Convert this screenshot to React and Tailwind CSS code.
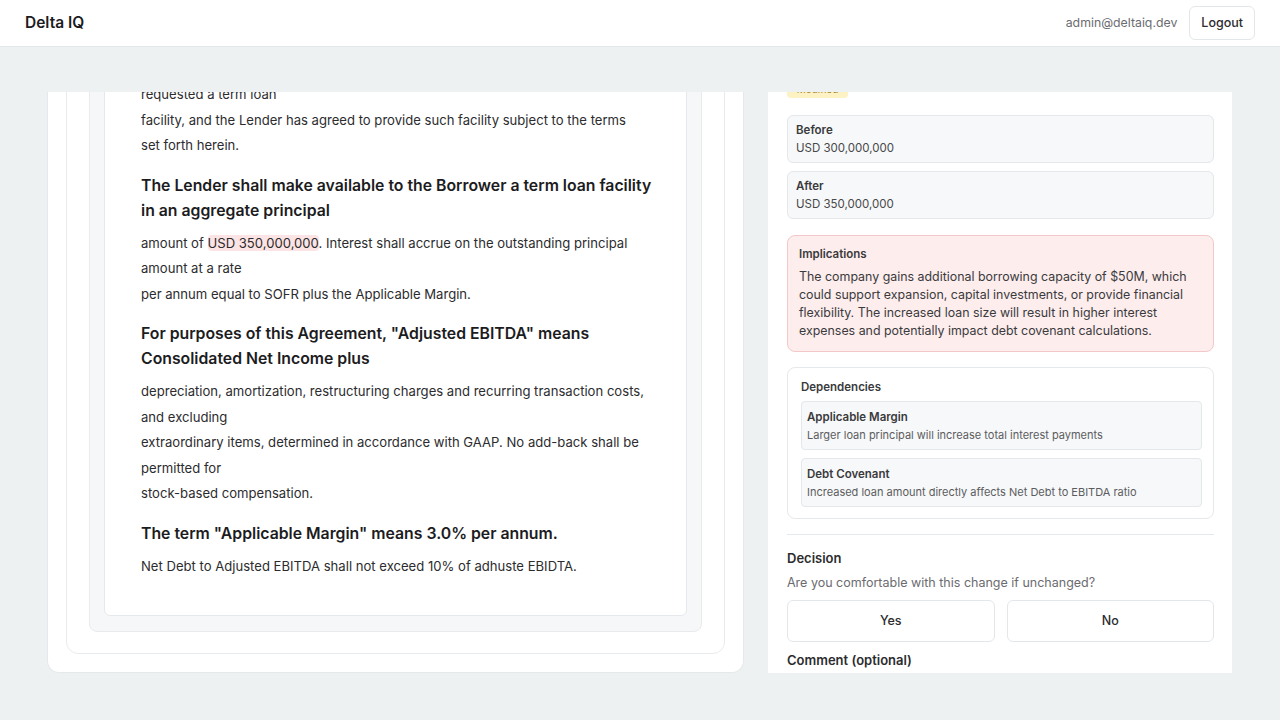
import React from 'react';

const docBlocks = [
  {
    type: 'p',
    lines: [
      'requested a term loan',
      'facility, and the Lender has agreed to provide such facility subject to the terms',
      'set forth herein.',
    ],
  },
  {
    type: 'h',
    lines: ['The Lender shall make available to the Borrower a term loan facility', 'in an aggregate principal'],
  },
  {
    type: 'p',
    lines: [
      'amount of __HL__. Interest shall accrue on the outstanding principal',
      'amount at a rate',
      'per annum equal to SOFR plus the Applicable Margin.',
    ],
  },
  {
    type: 'h',
    lines: ['For purposes of this Agreement, "Adjusted EBITDA" means', 'Consolidated Net Income plus'],
  },
  {
    type: 'p',
    lines: [
      'depreciation, amortization, restructuring charges and recurring transaction costs,',
      'and excluding',
      'extraordinary items, determined in accordance with GAAP. No add-back shall be',
      'permitted for',
      'stock-based compensation.',
    ],
  },
  { type: 'h', lines: ['The term "Applicable Margin" means 3.0% per annum.'] },
  { type: 'p', lines: ['Net Debt to Adjusted EBITDA shall not exceed 10% of adhuste EBIDTA.'] },
];

function DocLine({ text }) {
  if (text.includes('__HL__')) {
    const [a, b] = text.split('__HL__');
    return (
      <div className="whitespace-nowrap">
        {a}
        <span className="bg-[#fde4e4] rounded-sm">USD 350,000,000</span>
        {b}
      </div>
    );
  }
  return <div className="whitespace-nowrap">{text}</div>;
}

function Document() {
  return (
    <div className="flex flex-col">
      {docBlocks.map((b, i) =>
        b.type === 'h' ? (
          <div key={i} className="text-[15.8px] leading-[25px] font-semibold text-[#1c1c1e] mt-[14px] mb-[8px]">
            {b.lines.map((l, j) => (
              <div key={j} className="whitespace-nowrap">{l}</div>
            ))}
          </div>
        ) : (
          <div key={i} className="text-[13.1px] leading-[25.5px] text-[#2c2c2e]">
            {b.lines.map((l, j) => (
              <DocLine key={j} text={l} />
            ))}
          </div>
        )
      )}
    </div>
  );
}

function ValueBox({ label, value }) {
  return (
    <div className="bg-[#f6f8f9] border border-[#e4e8eb] rounded-md px-2 py-[6px] h-[48px]">
      <div className="text-[11.5px] leading-[17px] font-semibold text-[#3a3a3c]">{label}</div>
      <div className="text-[11.5px] leading-[18px] text-[#48484a]">{value}</div>
    </div>
  );
}

function DepItem({ title, desc }) {
  return (
    <div className="bg-[#f6f8f9] border border-[#e4e8eb] rounded-[4px] px-[5px] pt-[7px] h-[49px]">
      <div className="text-[11.5px] leading-[17px] font-semibold text-[#3a3a3c]">{title}</div>
      <div className="text-[11px] leading-[18px] text-[#5c5c60]">{desc}</div>
    </div>
  );
}

export default function App() {
  return (
    <div
      className="h-screen flex flex-col bg-[#eef1f2] overflow-hidden"
      style={{ fontFamily: 'Inter, "Noto Sans", "Liberation Sans", sans-serif' }}
    >
      <header className="h-[47px] shrink-0 bg-white border-b border-[#e3e7ea] flex items-center justify-between pl-[25px] pr-[25px]">
        <div className="text-[15.5px] font-semibold text-[#1c1c1e]">Delta IQ</div>
        <div className="flex items-center gap-[12px]">
          <span className="text-[12.3px] text-[#6b6b70]">admin@deltaiq.dev</span>
          <button className="h-[34px] px-[11px] border border-[#e3e7ea] rounded-md bg-white text-[12.5px] font-medium text-[#2c2c2e]">
            Logout
          </button>
        </div>
      </header>

      <main className="flex-1 min-h-0 flex gap-[24px] pl-[47px] pr-[48px] pt-[45px] pb-[47px]">
        {/* Document panel */}
        <section className="w-[697px] shrink-0 bg-white border-x border-b border-[#e6e9eb] rounded-b-xl overflow-hidden">
          <div className="-mt-[20px] px-[18px] pb-[18px] h-[calc(100%+20px)] flex flex-col">
            <div className="flex-1 border border-[#e8ebed] rounded-xl bg-white px-[22px] pb-[21px] flex flex-col">
              <div className="flex-1 border border-[#e8ebed] rounded-lg bg-[#f5f7f8] px-[14px] pb-[15px] flex flex-col">
                <div className="flex-1 border border-[#e6e9eb] rounded-md bg-white px-[36px] overflow-hidden">
                  <div className="mt-[7px]">
                    <Document />
                  </div>
                </div>
              </div>
            </div>
          </div>
        </section>

        {/* Change details panel */}
        <section className="w-[464px] shrink-0 bg-white overflow-hidden">
          <div className="-mt-[12px] pl-[19px] pr-[18px] flex flex-col">
            <div className="self-start w-[61px] h-[18px] rounded-sm bg-[#fdf2c3] text-[10px] text-[#a8862a] flex items-center justify-center">
              Modified
            </div>

            <div className="mt-[17px] flex flex-col gap-2">
              <ValueBox label="Before" value="USD 300,000,000" />
              <ValueBox label="After" value="USD 350,000,000" />
            </div>

            <div className="mt-[16px] bg-[#fdeded] border border-[#f3c8c8] rounded-lg px-[11px] pt-[9px] pb-[11px]">
              <div className="text-[11.5px] leading-[18px] font-semibold text-[#3a3a3c]">Implications</div>
              <p className="mt-[5px] text-[12.4px] leading-[18px] text-[#3a3a3c]">
                The company gains additional borrowing capacity of $50M, which could support expansion, capital
                investments, or provide financial flexibility. The increased loan size will result in higher interest
                expenses and potentially impact debt covenant calculations.
              </p>
            </div>

            <div className="mt-[15px] border border-[#e6e9eb] rounded-lg pl-[13px] pr-[11px] pt-[10px] pb-[11px]">
              <div className="text-[11.5px] leading-[18px] font-semibold text-[#3a3a3c]">Dependencies</div>
              <div className="mt-[5px] flex flex-col gap-[8px]">
                <DepItem title="Applicable Margin" desc="Larger loan principal will increase total interest payments" />
                <DepItem title="Debt Covenant" desc="Increased loan amount directly affects Net Debt to EBITDA ratio" />
              </div>
            </div>

            <div className="mt-[15px] border-t border-[#e6e9eb]" />

            <div className="mt-[13px] text-[13px] leading-[20px] font-semibold text-[#2c2c2e]">Decision</div>
            <div className="mt-[5px] text-[12.5px] leading-[20px] text-[#6b6b70]">
              Are you comfortable with this change if unchanged?
            </div>
            <div className="mt-[7px] grid grid-cols-2 gap-[12px]">
              <button className="h-[42px] border border-[#e3e7ea] rounded-md bg-white text-[12.5px] font-medium text-[#2c2c2e]">
                Yes
              </button>
              <button className="h-[42px] border border-[#e3e7ea] rounded-md bg-white text-[12.5px] font-medium text-[#2c2c2e]">
                No
              </button>
            </div>
            <div className="mt-[8px] text-[13px] leading-[20px] font-semibold text-[#2c2c2e]">Comment (optional)</div>
            <div className="mt-2 h-[80px] border border-[#e3e7ea] rounded-md" />
          </div>
        </section>
      </main>
    </div>
  );
}
